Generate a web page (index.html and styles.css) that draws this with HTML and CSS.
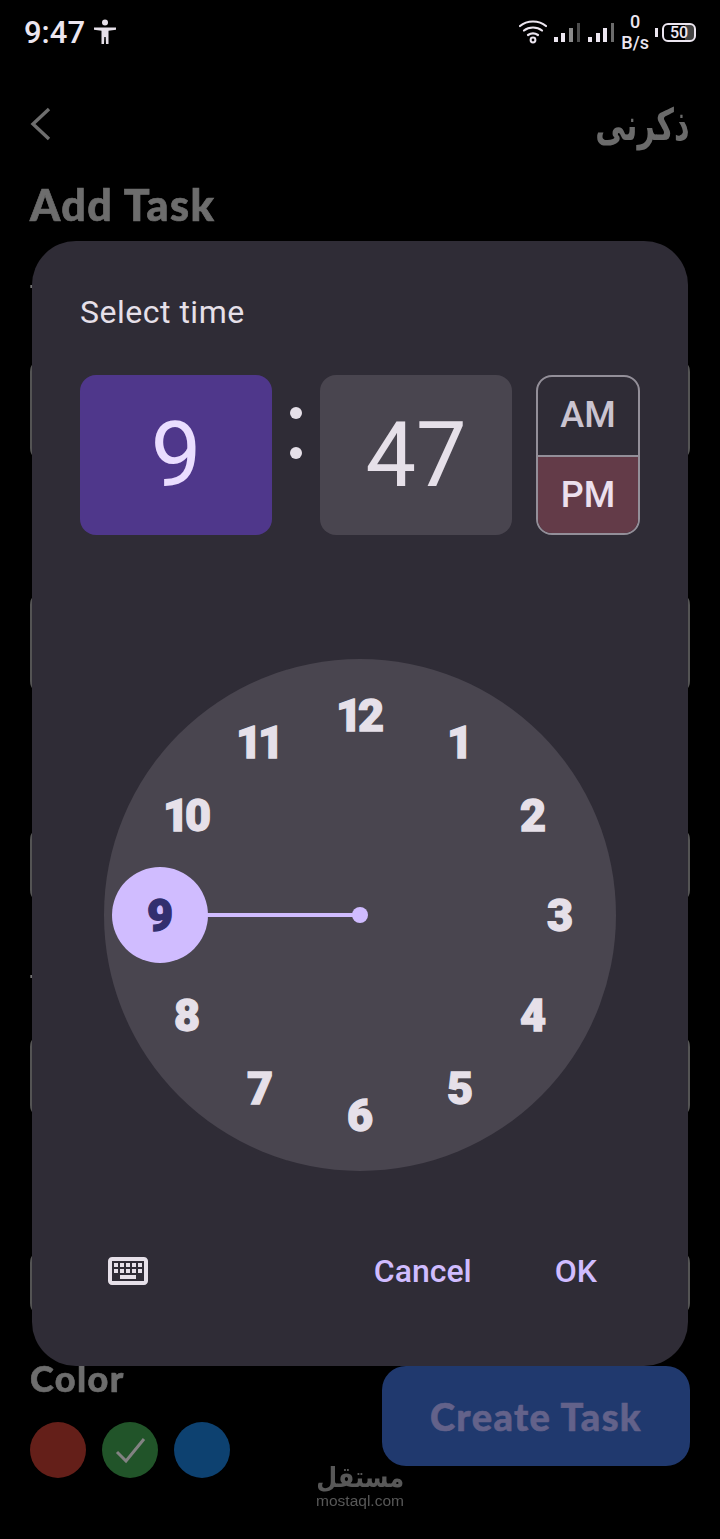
FILE: index.html
```html
<!DOCTYPE html>
<html lang="en">
<head>
  <meta charset="UTF-8" />
  <meta name="viewport" content="width=device-width, initial-scale=1.0"/>
  <title>Add Task</title>
  <link rel="stylesheet" href="styles.css">
</head>
<body>

  <div class="screen">
    <!-- Status bar -->
    <div class="status">
      <div class="status-left">
        <span class="status-time">9:47</span>
        <svg class="status-a11y" width="24" height="28" viewBox="0 0 24 28">
          <circle cx="12" cy="4.500" r="3" fill="#e6e0e9"/>
          <path d="M1 9.500 L23 9.500 L23 11.800 L15.500 12.800 L15.500 26 L13 26 L12.700 19 L11.300 19 L11 26 L8.500 26 L8.500 12.800 L1 11.800 Z" fill="#e6e0e9"/>
        </svg>
      </div>
      <div class="status-right">
        <svg class="status-wifi" width="28" height="28" viewBox="0 0 28 28" fill="none" stroke="#ece6f0" stroke-width="2.200" stroke-linecap="round">
          <path d="M1 8 C8 2 20 2 27 8"/>
          <path d="M5 12.500 C10 8.500 18 8.500 23 12.500"/>
          <path d="M9 17 C12 15 16 15 19 17"/>
          <circle cx="14" cy="22" r="2.400" stroke-width="2"/>
        </svg>
        <svg class="status-signal" width="62" height="22" viewBox="0 0 62 22" fill="#ece6f0">
          <rect x="1" y="16" width="4" height="5"/>
          <rect x="8" y="12" width="4" height="9"/>
          <rect x="16" y="7" width="4" height="14" fill="#8b8b8b"/>
          <rect x="24" y="2" width="3" height="19" fill="#4c4c4c"/>
          <rect x="35" y="16" width="4" height="5"/>
          <rect x="43" y="12" width="4" height="9"/>
          <rect x="50" y="7" width="4" height="14"/>
          <rect x="58" y="2" width="3" height="19" fill="#6b6b6b"/>
        </svg>
        <div class="status-speed"><span>0</span><span>B/s</span></div>
        <div class="battery-nub"></div>
        <div class="battery"><span>50</span></div>
      </div>
    </div>

    <!-- Page behind the dialog -->
    <div class="page">
      <div class="header">
        <svg width="24" height="36" viewBox="0 0 24 36" fill="none" stroke="#707070" stroke-width="3.400">
          <path d="M19 3 L3 18 L19 33"/>
        </svg>
        <span class="app-name" lang="ar" dir="rtl">ذكرنى</span>
      </div>
      <h1>Add Task</h1>

      <div class="field field-title">
        <label>Title</label>
        <div class="box"></div>
      </div>
      <div class="field field-note">
        <label>Note</label>
        <div class="box"></div>
      </div>
      <div class="field field-date">
        <label>Date</label>
        <div class="box"></div>
      </div>
      <div class="field field-time">
        <label>Time</label>
        <div class="box"></div>
      </div>
      <div class="field field-repeat">
        <label>Repeat</label>
        <div class="box"></div>
      </div>

      <div class="footer">
        <div class="colors">
          <h2>Color</h2>
          <div class="swatches">
            <span class="swatch red"></span>
            <span class="swatch green">
              <svg width="32" height="32" viewBox="0 0 32 32" fill="none" stroke="#848484" stroke-width="3">
                <path d="M3 18 L12 27 L30 5"/>
              </svg>
            </span>
            <span class="swatch blue"></span>
          </div>
        </div>
        <button class="create">Create Task</button>
      </div>
    </div>

    <!-- Time picker -->
    <div class="dialog">
      <p class="dialog-title">Select time</p>

      <div class="time-row">
        <div class="time-cell hour">9</div>
        <div class="colon"><i></i><i></i></div>
        <div class="time-cell minute">47</div>
        <div class="period">
          <div class="am">AM</div>
          <div class="pm">PM</div>
        </div>
      </div>

      <svg class="dial" width="512" height="512" viewBox="0 0 512 512">
        <circle cx="256" cy="256" r="256" fill="#49454f"/>
        <line x1="56" y1="256" x2="256" y2="256" stroke="#d0bcff" stroke-width="4"/>
        <circle cx="256" cy="256" r="8" fill="#d0bcff"/>
        <circle cx="56" cy="256" r="48" fill="#d0bcff"/>
        <g class="dial-nums" text-anchor="middle">
          <text class="dial-two" x="254" y="72">12</text>
          <text x="356" y="99">1</text>
          <text x="429" y="172">2</text>
          <text x="456" y="272">3</text>
          <text x="429" y="372">4</text>
          <text x="356" y="445">5</text>
          <text x="256" y="472">6</text>
          <text x="156" y="445">7</text>
          <text x="83" y="372">8</text>
          <text class="dial-on" x="56" y="272">9</text>
          <text class="dial-two" x="81" y="172">10</text>
          <text class="dial-two" x="154" y="99">11</text>
        </g>
      </svg>

      <div class="actions">
        <svg class="keyboard" width="48" height="48" viewBox="0 0 24 24" fill="#e6e0e9">
          <path d="M20 7v10H4V7h16m0-2H4c-1.100 0-1.990.9-1.990 2L2 17c0 1.100.9 2 2 2h16c1.100 0 2-.9 2-2V7c0-1.100-.9-2-2-2zm-9 3h2v2h-2zm0 3h2v2h-2zM8 8h2v2H8zm0 3h2v2H8zm-3 0h2v2H5zm0-3h2v2H5zm3 6h8v2H8zm6-3h2v2h-2zm0-3h2v2h-2zm3 3h2v2h-2zm0-3h2v2h-2z"/>
        </svg>
        <button class="action cancel">Cancel</button>
        <button class="action ok">OK</button>
      </div>
    </div>

    <!-- Watermark -->
    <div class="watermark">
      <span class="watermark-ar" lang="ar" dir="rtl">مستقل</span>
      <span class="watermark-en">mostaql.com</span>
    </div>
  </div>

</body>
</html>
```

FILE: styles.css
```css
* {
  margin: 0;
  padding: 0;
  box-sizing: border-box;
}

body {
  background: #000;
  font-family: Roboto, sans-serif;
}

.screen {
  position: relative;
  width: 720px;
  height: 1539px;
  overflow: hidden;
}

/* Status bar */
.status {
  display: flex;
  justify-content: space-between;
  align-items: center;
  height: 64px;
  padding: 0 25px 0 24px;
  color: #ece6f0;
}

.status-left {
  display: flex;
  align-items: center;
  gap: 8px;
}

.status-time {
  font-size: 31px;
  font-weight: 500;
}

.status-right {
  display: flex;
  align-items: center;
}

.status-wifi {
  margin-right: 6px;
}

.status-signal {
  margin: 0 6px 0 0;
}

.status-speed {
  display: flex;
  flex-direction: column;
  align-items: center;
  font-size: 18px;
  line-height: 21.500px;
  font-weight: 500;
}

.battery-nub {
  width: 3px;
  height: 9px;
  margin-left: 6px;
  background: #ece6f0;
}

.battery {
  display: flex;
  align-items: center;
  width: 34px;
  height: 19px;
  margin: 0 -1px 0 4px;
  border: 2px solid #ece6f0;
  border-radius: 6px;
  background: linear-gradient(90deg, transparent 70%, #444 70%);
  font-size: 16px;
  font-weight: 500;
  padding-left: 6px;
}

/* Page behind the dialog */
.page {
  padding: 0 30px;
  opacity: 0.99;
}

.header {
  display: flex;
  justify-content: space-between;
  align-items: center;
  height: 48px;
  margin-top: 36px;
}

.app-name {
  font-family: "DejaVu Sans", sans-serif;
  font-size: 44px;
  font-weight: 700;
  color: #6d6d6d;
  transform: scaleX(0.69);
  transform-origin: right center;
}

h1 {
  height: 50px;
  margin-top: 32px;
  font-family: Lato, sans-serif;
  font-size: 43px;
  line-height: 50px;
  letter-spacing: 1.500px;
  font-weight: 900;
  color: #6f6f6f;
  -webkit-text-stroke: 0.700px #6f6f6f;
}

label {
  display: block;
  height: 40px;
  font-family: Lato, sans-serif;
  font-size: 24px;
  line-height: 26px;
  font-weight: 900;
  color: #777;
}

.box {
  border: 2px solid #555;
  border-radius: 14px;
}

.field-note label,
.field-date label,
.field-repeat label {
  padding-left: 6px;
}

.field-title { margin-top: 51px; }
.field-title .box { height: 104px; margin-top: 37px; }

.field-note { margin-top: 52px; }
.field-note .box { height: 104px; margin-top: 37px; }

.field-date { margin-top: 54px; }
.field-date .box { height: 78px; margin-top: 37px; }

.field-time { margin-top: 67px; }
.field-time .box { height: 86px; margin-top: 22px; }

.field-repeat { margin-top: 53px; }
.field-repeat .box { height: 68px; margin-top: 37px; }

.footer {
  display: flex;
  justify-content: space-between;
  margin-top: 49px;
}

h2 {
  height: 28px;
  font-family: Lato, sans-serif;
  font-size: 36px;
  line-height: 24px;
  letter-spacing: 1.400px;
  font-weight: 900;
  color: #6f6f6f;
  -webkit-text-stroke: 0.600px #6f6f6f;
}

.swatches {
  display: flex;
  gap: 16px;
  margin-top: 28px;
}

.swatch {
  display: flex;
  justify-content: center;
  align-items: center;
  width: 56px;
  height: 56px;
  border-radius: 50%;
}

.red { background: #66201a; }
.green { background: #22552a; }
.blue { background: #0e4272; }

.create {
  width: 308px;
  height: 100px;
  border: none;
  border-radius: 24px;
  background: #213a70;
  font-family: Lato, sans-serif;
  font-size: 38px;
  letter-spacing: 1.400px;
  font-weight: 900;
  color: #65648c;
  -webkit-text-stroke: 0.600px #65648c;
}

/* Time picker */
.dialog {
  position: absolute;
  top: 241px;
  left: 32px;
  display: flex;
  flex-direction: column;
  width: 656px;
  height: 1125px;
  padding: 0 48px;
  border-radius: 44px;
  background: #2f2c36;
}

.dialog-title {
  margin-top: 53px;
  height: 36px;
  font-size: 32px;
  line-height: 36px;
  letter-spacing: 0.500px;
  color: #e6e0e9;
}

.time-row {
  display: flex;
  height: 160px;
  margin-top: 45px;
}

.time-cell {
  display: flex;
  justify-content: center;
  align-items: center;
  width: 192px;
  border-radius: 16px;
  font-size: 90px;
}

.hour {
  background: #4f378b;
  color: #eaddff;
}

.minute {
  background: #49454f;
  color: #e6e0e9;
}

.colon {
  display: flex;
  flex-direction: column;
  align-items: center;
  gap: 28px;
  width: 48px;
  padding-top: 32px;
}

.colon i {
  width: 12px;
  height: 12px;
  border-radius: 50%;
  background: #e6e0e9;
}

.period {
  display: flex;
  flex-direction: column;
  width: 104px;
  margin-left: 24px;
  border: 2px solid #938f99;
  border-radius: 16px;
  overflow: hidden;
  font-size: 36px;
  font-weight: 500;
}

.am, .pm {
  display: flex;
  flex: 1;
  justify-content: center;
  align-items: center;
}

.am {
  color: #cac4d0;
  padding-bottom: 2px;
}

.pm {
  border-top: 2px solid #938f99;
  background: #633b48;
  color: #ece0ee;
}

.dial {
  align-self: center;
  margin-top: 124px;
}

.dial-nums {
  font-family: Roboto, sans-serif;
  font-size: 45px;
  font-weight: 900;
  fill: #e6e0e9;
  stroke: #e6e0e9;
  stroke-width: 1.300px;
}

.dial-two {
  letter-spacing: -4px;
}

.dial-on {
  fill: #322f6f;
  stroke: #322f6f;
}

.actions {
  display: flex;
  align-items: center;
  height: 48px;
  margin-top: 76px;
}

.keyboard {
  margin-left: 24px;
  margin-right: auto;
}

.action {
  border: none;
  background: none;
  font-family: Roboto, sans-serif;
  font-size: 32px;
  font-weight: 500;
  color: #d0bcff;
}

.cancel {
  margin-right: 83px;
}

.ok {
  margin-right: 43px;
}

/* Watermark */
.watermark {
  position: absolute;
  top: 1463px;
  left: 316px;
  display: flex;
  flex-direction: column;
  align-items: center;
  width: 88px;
  color: #585858;
}

.watermark-ar {
  font-family: "DejaVu Sans", sans-serif;
  font-size: 28px;
  font-weight: 700;
  line-height: 30px;
  transform: scaleX(0.86);
}

.watermark-en {
  font-family: "Liberation Sans", sans-serif;
  font-size: 15.500px;
  line-height: 16px;
}
```
